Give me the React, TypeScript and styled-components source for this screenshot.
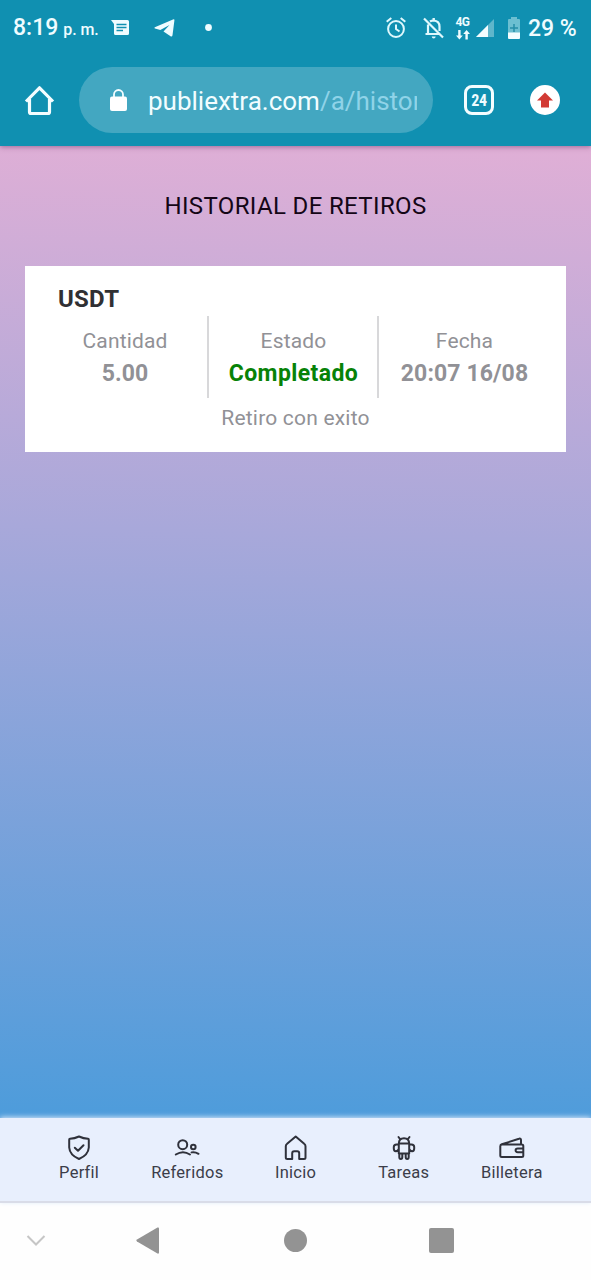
import React from "react";
import styled, { createGlobalStyle } from "styled-components";

const Global = createGlobalStyle`
  * { box-sizing: border-box; }
  body { margin: 0; font-family: Roboto, "Liberation Sans", sans-serif; background: #fff; }
  svg { display: block; flex: none; overflow: visible; }
`;

const Screen = styled.div`
  width: 591px;
  height: 1280px;
  display: flex;
  flex-direction: column;
  overflow: hidden;
`;

const BrowserChrome = styled.header`
  position: relative;
  background: #1090b1;
  height: 146px;
  flex: none;
  color: #effcff;
  box-shadow: 0 1px 5px rgba(90, 40, 90, 0.5);
`;

const StatusBar = styled.div`
  height: 55px;
  display: flex;
  align-items: center;
  padding: 0 14px 0 13px;
`;

const Slot = styled.div<{ $gap: number }>`
  margin-left: ${(p) => p.$gap}px;
`;

const Clock = styled.div`
  width: 98px;
  font-size: 23px;
  font-weight: 500;
  line-height: 52px;
  padding-top: 3px;
  white-space: nowrap;
  small { font-size: 16px; margin-left: 5px; letter-spacing: -0.1px; }
`;

const Spacer = styled.div`
  flex: 1;
`;

const Network = styled.div`
  width: 15px;
  display: flex;
  flex-direction: column;
  align-items: center;
  gap: 2px;
  margin-left: 11px;
  font-size: 12px;
  line-height: 12px;
  font-weight: 700;
  letter-spacing: -0.5px;
`;

const BatteryText = styled.div`
  width: 49px;
  margin-left: 8px;
  padding-top: 1px;
  font-size: 23px;
  font-weight: 500;
  white-space: nowrap;
`;

const AddressRow = styled.div`
  height: 90px;
  display: flex;
  align-items: center;
  padding: 0 31px 0 24px;
`;

const AddressField = styled.div`
  width: 354px;
  height: 66px;
  margin: 0 31px 0 24px;
  padding: 0 16px 0 31px;
  border-radius: 33px;
  background: #43a7c1;
  display: flex;
  align-items: center;
  gap: 21px;
`;

const Url = styled.div`
  flex: 1;
  overflow: hidden;
  white-space: nowrap;
  font-size: 26px;
  line-height: 36px;
  padding-top: 1px;
  color: #f2fdff;
  span { color: #8fd3e8; }
`;

const TabCount = styled.div`
  width: 30px;
  height: 30px;
  border: 3px solid #f4fdff;
  border-radius: 8px;
  display: flex;
  align-items: center;
  justify-content: center;
  font-size: 16px;
  font-weight: 700;
  font-stretch: condensed;
  letter-spacing: -0.4px;
`;

const UpdateBadge = styled.div`
  width: 30px;
  height: 30px;
  margin-left: 36px;
  border-radius: 50%;
  background: #fff;
  display: flex;
  align-items: center;
  justify-content: center;
`;

const Page = styled.main`
  height: 972px;
  flex: none;
  padding: 46px 25px 0;
  background: linear-gradient(181.5deg, #e0afd6 0%, #a8a8da 40%, #4d9cdb 100%);
`;

const Title = styled.h1`
  margin: 0 0 46px;
  font-size: 24px;
  line-height: 28px;
  font-weight: 400;
  letter-spacing: 0.36px;
  text-align: center;
  color: #140616;
`;

const Card = styled.section`
  height: 186px;
  padding: 17px 33px 0;
  background: #fff;
  color: #919196;
`;

const Currency = styled.h2`
  margin: 0;
  font-size: 24px;
  line-height: 32px;
  font-weight: 700;
  letter-spacing: 0.25px;
  color: #303033;
`;

const Columns = styled.div`
  display: flex;
  height: 82px;
  margin: 1px -16px 0;
`;

const Column = styled.div<{ $width: number }>`
  width: ${(p) => p.$width}px;
  padding: 9px 0 0 1px;
  text-align: center;
  & + & { border-left: 2px solid #d8d8da; }
`;

const Label = styled.div`
  font-size: 21px;
  line-height: 32px;
  letter-spacing: 0.15px;
`;

const Value = styled.div<{ $done?: boolean }>`
  font-size: 23px;
  line-height: 33px;
  font-weight: 700;
  letter-spacing: ${(p) => (p.$done ? 0.4 : 0.1)}px;
  white-space: nowrap;
  color: ${(p) => (p.$done ? "#078207" : "#919196")};
`;

const Note = styled.div`
  padding-top: 4px;
  font-size: 21px;
  line-height: 32px;
  letter-spacing: 0.2px;
  text-align: center;
`;

const TabBar = styled.nav`
  position: relative;
  height: 85px;
  flex: none;
  display: flex;
  padding: 17px 25px 0;
  background: #e8effd;
  border-bottom: 2px solid #d9dce8;
  box-shadow: 0 -1px 5px #d5e5f8;
`;

const Tab = styled.div`
  flex: 1;
  display: flex;
  flex-direction: column;
  align-items: center;
  gap: 1px;
  font-size: 16.5px;
  line-height: 22px;
  letter-spacing: 0.25px;
  color: #3b3d49;
`;

const SystemNav = styled.footer`
  flex: 1;
  display: flex;
  align-items: center;
  padding: 0 0 3px 26px;
  background: #fefefe;
`;

const line = { fill: "none", stroke: "#2f313b", strokeWidth: 2, strokeLinecap: "round", strokeLinejoin: "round" } as const;

const MessageIcon = () => (
  <svg width="18" height="16" viewBox="0 0 18 16">
    <path d="M0 0h16.5Q18 0 18 1.5v12Q18 15 16.500 15H4.500Q3 15 3 13.500V4Z" fill="#effcff" />
    <path d="M5.500 4.500h10M5.500 7.500h10M5.500 10.500h6.500" stroke="#1090b1" strokeWidth="1.400" />
  </svg>
);

const TelegramIcon = () => (
  <svg width="21" height="18" viewBox="0 0 21 18">
    <path d="M.8 8.300 19 .4Q20.700-.1 20.400 1.500L18.500 16.300Q18 18.300 16.200 17L9.500 12.400 15.500 6 6.300 11 1 9.500Q-.2 9 .8 8.300Z" fill="#effcff" />
  </svg>
);

const DotIcon = () => (
  <svg width="7" height="7" viewBox="0 0 7 7"><circle cx="3.5" cy="3.5" r="3.4" fill="#effcff" /></svg>
);

const AlarmIcon = () => (
  <svg width="20" height="21" viewBox="0 0 20 21" fill="none" stroke="#dff8fd" strokeWidth="2">
    <circle cx="10" cy="12" r="7.900" />
    <path d="M10 7.500V12l3.500 2.500M.7 4.800 5.300 1M19.300 4.800 14.700 1" />
  </svg>
);

const MutedBellIcon = () => (
  <svg width="21" height="22" viewBox="0 0 21 22" fill="none" stroke="#dff8fd" strokeWidth="2.200">
    <path d="M1 1.500 20 20.500M5 7.500V16M2.500 17h14M7 4.500Q8.500 3.500 10.700 3.500 16.500 4 16.500 9.500v4.500" />
    <path d="M8.700 19.500h4Q12.500 21.500 10.700 21.500T8.700 19.500ZM9.500 1h2.400v2.500H9.500Z" fill="#dff8fd" stroke="none" />
  </svg>
);

const DataArrowsIcon = () => (
  <svg width="14" height="10" viewBox="0 0 14 10" fill="#effcff">
    <path d="M2.200 0h2.400v5.500h2.200L3.400 9.500 0 5.500h2.200ZM9.400 9.500h2.400V4H14L10.600 0 7.200 4h2.200Z" />
  </svg>
);

const SignalIcon = () => (
  <svg width="18" height="18" viewBox="0 0 18 18">
    <path d="M18 0V18H0Z" fill="#5fb6cb" />
    <path d="M12 6V18H0Z" fill="#f4fdff" />
  </svg>
);

const BatteryIcon = () => (
  <svg width="12" height="22" viewBox="0 0 12 22">
    <path d="M3 0h6v2H11q1 0 1 1v13H0V3q0-1 1-1h2Z" fill="#6cbfd1" />
    <path d="M0 15.500h12V21q0 1-1 1H1q-1 0-1-1Z" fill="#f4fdff" />
    <path d="M6 7v8M2 11h8" stroke="#258fa8" strokeWidth="1.500" />
  </svg>
);

const BrowserHomeIcon = () => (
  <svg width="31" height="31" viewBox="0 0 31 31" fill="none" stroke="#f4fdff" strokeWidth="3.200" strokeLinejoin="round">
    <path d="M2 16.500 15.500 2.800 29 16.500M5.500 14V27Q5.500 28.500 7 28.500H24Q25.500 28.500 25.500 27V14" />
  </svg>
);

const LockIcon = () => (
  <svg width="17" height="22" viewBox="0 0 17 22">
    <path d="M4 9V5.500a4.500 4.500 0 0 1 9 0V9" fill="none" stroke="#f4fdff" strokeWidth="1.800" />
    <rect y="7.500" width="17" height="14.500" rx="2" fill="#fff" />
  </svg>
);

const UpArrowIcon = () => (
  <svg width="16" height="16" viewBox="0 0 16 16"><path d="M8 .5 16 8.500H12V15.500H4V8.500H0Z" fill="#d23a34" /></svg>
);

const ShieldIcon = () => (
  <svg width="26" height="26" viewBox="0 0 26 26" {...line}>
    <path d="M13 1.500Q17.500 3.500 22 3.800 22.800 3.900 22.800 4.700V12.500Q22.300 20 13 24 3.700 20 3.200 12.500V4.700Q3.200 3.900 4 3.800 8.500 3.500 13 1.500ZM8.800 12.700l3.200 3 5.500-5.500" />
  </svg>
);

const PeopleIcon = () => (
  <svg width="26" height="26" viewBox="0 0 26 26" {...line}>
    <circle cx="8.700" cy="9.700" r="4.500" />
    <circle cx="19.300" cy="12" r="2.300" />
    <path d="M1.800 19.500Q9 14.800 16 19.500M17.500 17.400Q21 16.600 24.500 18.800" />
  </svg>
);

const HouseIcon = () => (
  <svg width="26" height="26" viewBox="0 0 26 26" {...line}>
    <path d="M12.700 1.500 21.200 8.800Q22.500 9.800 22.500 11.300V22.500Q22.500 24 21 24H16.200V18.300Q16.200 16.300 14.200 16.300H11.200Q9.200 16.300 9.200 18.300V24H4.300Q2.800 24 2.800 22.500V11.300Q2.800 9.800 4.100 8.800Z" />
  </svg>
);

const AndroidIcon = () => (
  <svg width="26" height="26" viewBox="0 0 26 26" {...line}>
    <path d="M7.800 8.500Q8 3.300 13 3.300T18.200 8.500V18.500H7.800ZM7.800 8.500h10.400M9.300 4.300 7.500 2M16.700 4.300l1.800-2.300M7.800 9.500H5.500Q2.800 9.500 2.800 12v1.500q0 2.700 2 2.700T7.800 14M18.200 9.500h2.300Q23.200 9.500 23.200 12v1.500q0 2.700-2 2.700T18.200 14M8.300 19v3q0 1.900 1.500 1.900T11.300 22V19M14.700 19v3q0 1.900 1.500 1.900T17.700 22V19" />
  </svg>
);

const WalletIcon = () => (
  <svg width="26" height="26" viewBox="0 0 26 26" {...line}>
    <path d="M3 9.500H22.800Q24.300 9.500 24.300 11V20.500Q24.300 22 22.800 22H2.800Q1.300 22 1.300 20.500V11.200Q1.300 9.800 2.800 9.300L20 3.800Q22 3.100 22 5V9.500M24.300 13.500H18.800Q16.600 13.500 16.600 15.300T18.800 17.200H24.300" />
  </svg>
);

const tabs = [
  { label: "Perfil", Icon: ShieldIcon },
  { label: "Referidos", Icon: PeopleIcon },
  { label: "Inicio", Icon: HouseIcon },
  { label: "Tareas", Icon: AndroidIcon },
  { label: "Billetera", Icon: WalletIcon },
];

export default function App() {
  return (
    <Screen>
      <Global />
      <BrowserChrome>
        <StatusBar>
          <Clock>8:19<small>p. m.</small></Clock>
          <MessageIcon />
          <Slot $gap={25}><TelegramIcon /></Slot>
          <Slot $gap={30}><DotIcon /></Slot>
          <Spacer />
          <AlarmIcon />
          <Slot $gap={17}><MutedBellIcon /></Slot>
          <Network>4G<DataArrowsIcon /></Network>
          <Slot $gap={6}><SignalIcon /></Slot>
          <Slot $gap={14}><BatteryIcon /></Slot>
          <BatteryText>29 %</BatteryText>
        </StatusBar>
        <AddressRow>
          <BrowserHomeIcon />
          <AddressField>
            <LockIcon />
            <Url>publiextra.com<span>/a/historial</span></Url>
          </AddressField>
          <TabCount>24</TabCount>
          <UpdateBadge><UpArrowIcon /></UpdateBadge>
        </AddressRow>
      </BrowserChrome>
      <Page>
        <Title>HISTORIAL DE RETIROS</Title>
        <Card>
          <Currency>USDT</Currency>
          <Columns>
            <Column $width={165}><Label>Cantidad</Label><Value>5.00</Value></Column>
            <Column $width={170}><Label>Estado</Label><Value $done>Completado</Value></Column>
            <Column $width={172}><Label>Fecha</Label><Value>20:07 16/08</Value></Column>
          </Columns>
          <Note>Retiro con exito</Note>
        </Card>
      </Page>
      <TabBar>
        {tabs.map(({ label, Icon }) => (
          <Tab key={label}><Icon />{label}</Tab>
        ))}
      </TabBar>
      <SystemNav>
        <svg width="20" height="12" viewBox="0 0 20 12"><path d="M1.500 2 10 10.500 18.500 2" fill="none" stroke="#c6c6c6" strokeWidth="2" /></svg>
        <Slot $gap={90}><svg width="24" height="27" viewBox="0 0 24 27"><path d="M1 12.500 21.500.5Q23 0 23 1.500V25.500Q23 27 21.500 26.500L1 14.500Q-.5 13.500 1 12.500Z" fill="#939393" /></svg></Slot>
        <Slot $gap={124}><svg width="23" height="23" viewBox="0 0 23 23"><circle cx="11.500" cy="11.500" r="11.500" fill="#939393" /></svg></Slot>
        <Slot $gap={122}><svg width="25" height="25" viewBox="0 0 25 25"><rect width="25" height="25" rx="2" fill="#939393" /></svg></Slot>
      </SystemNav>
    </Screen>
  );
}
